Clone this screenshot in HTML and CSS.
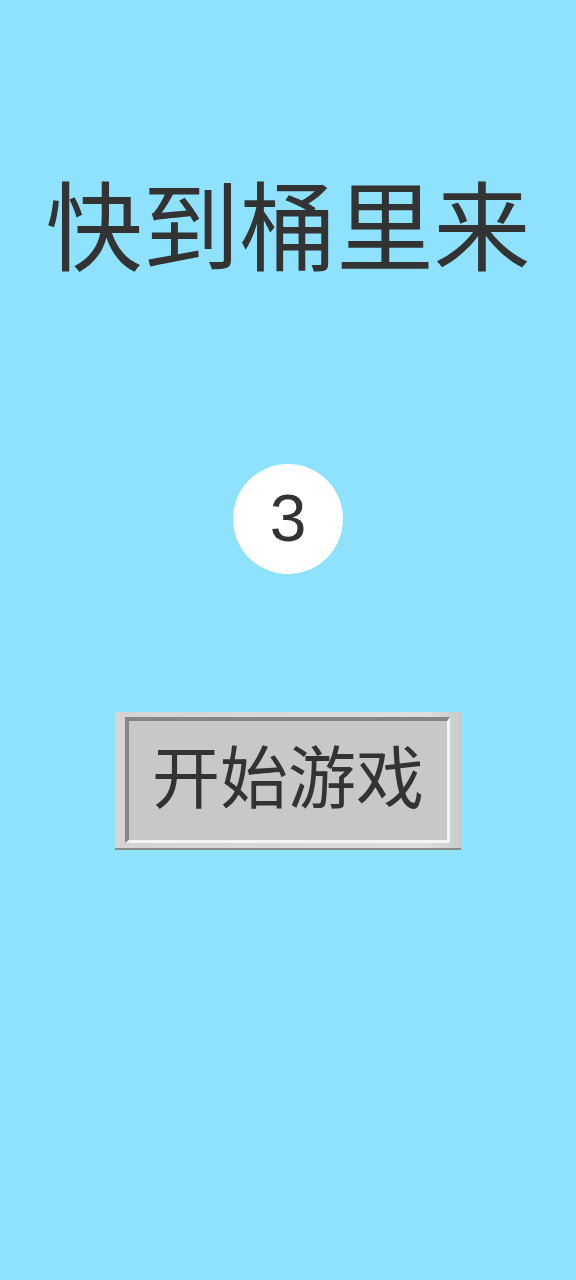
FILE: index.html
```html
<!DOCTYPE html>
<html lang="zh-CN">
<head>
<meta charset="UTF-8">
<meta name="viewport" content="width=device-width, initial-scale=1.0">
<title>快到桶里来</title>
<link rel="stylesheet" href="styles.css">
</head>
<body>
  <main class="start-screen">
    <h1 class="game-title">快到桶里来</h1>
    <div class="countdown">3</div>
    <div class="start-frame">
      <button class="start-btn">开始游戏</button>
    </div>
  </main>
</body>
</html>
```

FILE: styles.css
```css
body {
  margin: 0;
  padding: 0;
  background-color: #8ee2fe;
  font-family: "Noto Sans CJK SC", "Noto Sans", sans-serif;
  color: #333333;
}

.start-screen {
  height: 1280px;
  display: flex;
  flex-direction: column;
  align-items: center;
}

.game-title {
  margin: 173px 0 0 0;
  font-size: 97px;
  font-weight: 400;
  line-height: 96px;
  letter-spacing: 0;
}

.countdown {
  margin-top: 195px;
  width: 110px;
  height: 110px;
  border-radius: 50%;
  background-color: #ffffff;
  font-family: "Liberation Sans", Arial, sans-serif;
  font-size: 66px;
  line-height: 108px;
  text-align: center;
}

/* light raised frame around the start button */
.start-frame {
  margin-top: 138px;
  width: 325px;
  padding: 5px 11px 5px 10px;
  background: linear-gradient(to right, #d4d4d4, #dedede 90%, #c9c9c9);
  border-bottom: 2px solid #8a8a8a;
}

.start-btn {
  display: block;
  width: 100%;
  height: 126px;
  box-sizing: border-box;
  border-style: solid;
  border-width: 4px 3px 3px 4px;
  border-color: #858585 #f4f4f4 #f4f4f4 #858585;
  background-color: #c8c8c8;
  font-family: "Noto Sans CJK SC", sans-serif;
  font-size: 68px;
  color: #333333;
  padding: 0 0 14px 0;
  cursor: pointer;
}
```
